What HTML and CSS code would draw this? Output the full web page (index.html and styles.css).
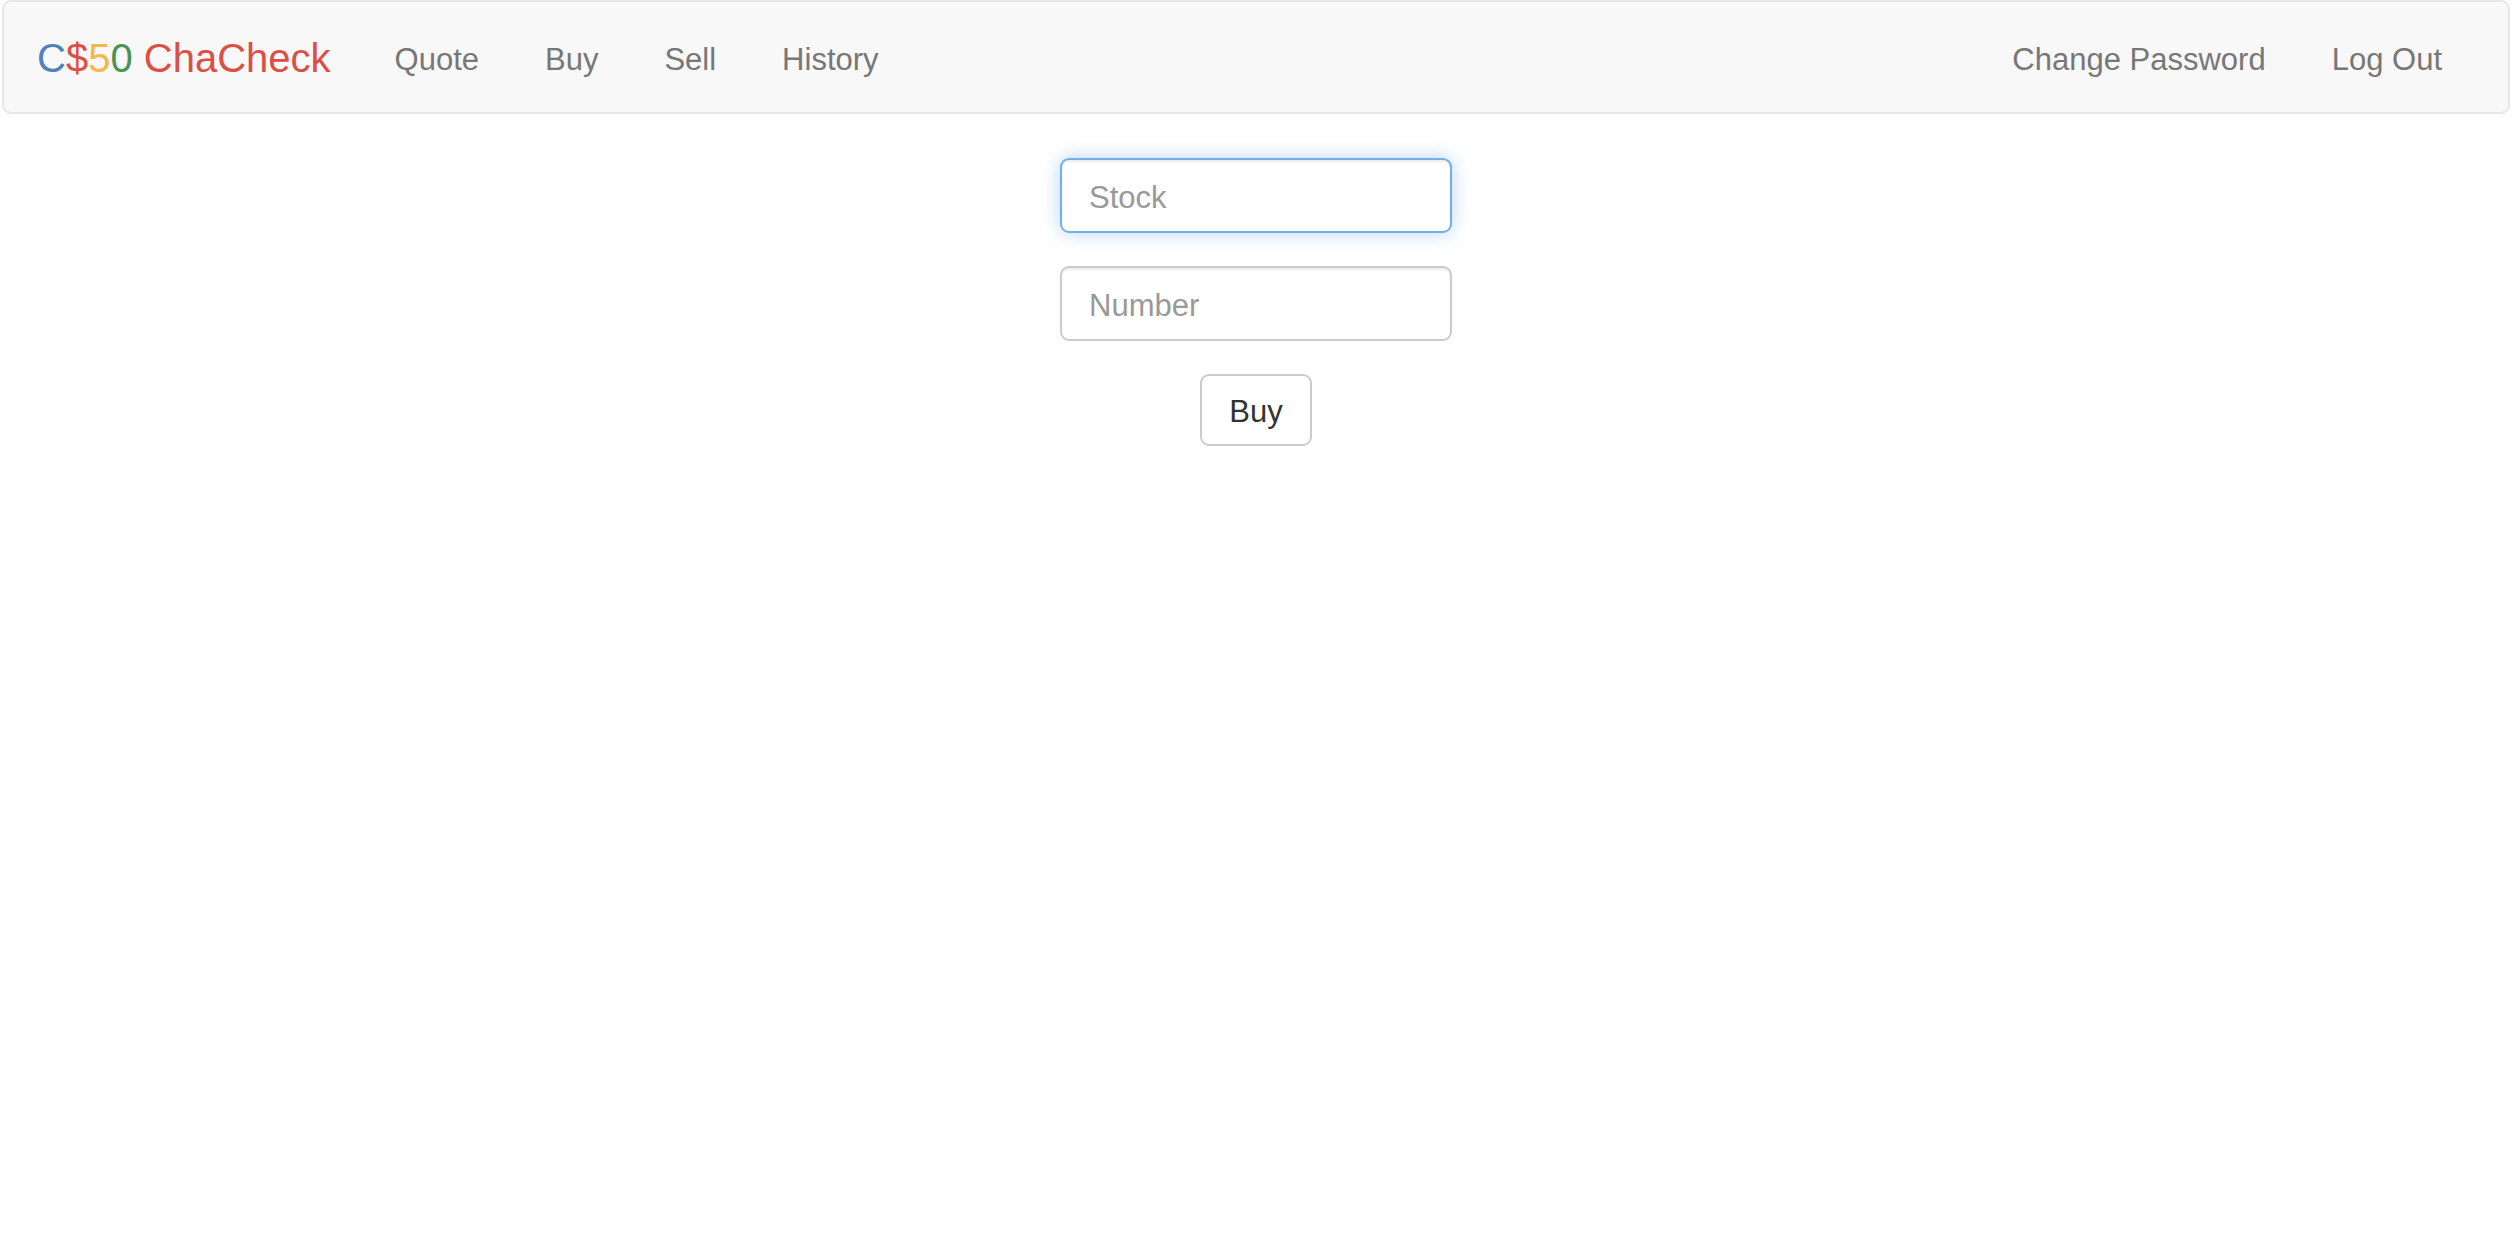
FILE: index.html
```html
<!DOCTYPE html>
<html lang="en">
<head>
<meta charset="utf-8">
<meta name="viewport" content="width=device-width, initial-scale=1">
<title>C$50 ChaCheck: Buy</title>
<link rel="stylesheet" href="styles.css">
</head>
<body>
<nav class="navbar">
  <a class="brand" href="/"><span class="blue">C</span><span class="red">$</span><span class="yellow">5</span><span class="green">0</span> <span class="red">ChaCheck</span></a>
  <ul class="nav-list">
    <li><a class="nav-link" href="/quote">Quote</a></li>
    <li><a class="nav-link" href="/buy">Buy</a></li>
    <li><a class="nav-link" href="/sell">Sell</a></li>
    <li><a class="nav-link" href="/history">History</a></li>
  </ul>
  <ul class="nav-list nav-right">
    <li><a class="nav-link" href="/password">Change Password</a></li>
    <li><a class="nav-link" href="/logout">Log Out</a></li>
  </ul>
</nav>
<main>
  <form class="trade-form" action="/buy" method="post">
    <input class="field" type="text" name="symbol" placeholder="Stock" aria-label="Stock" autocomplete="off" autofocus>
    <input class="field" type="text" name="shares" placeholder="Number" aria-label="Number" autocomplete="off">
    <button class="button" type="submit">Buy</button>
  </form>
</main>
</body>
</html>
```
FILE: styles.css
```css
* {
  box-sizing: border-box;
}

body {
  margin: 0 4px 0 2px;
  background: #fff;
  color: #333;
  font-family: "Helvetica Neue", Helvetica, "Liberation Sans", Arial, sans-serif;
  font-size: 31px;
  line-height: 44px;
}

.navbar {
  display: flex;
  flex-wrap: wrap;
  align-items: center;
  padding: 0 33px 0 0;
  border: 2px solid #e7e7e7;
  border-radius: 9px;
  background: #f8f8f8;
}

.brand {
  padding: 34px 31px 32px 33px;
  font-size: 40px;
  text-decoration: none;
}

.blue { color: #537fbe; }
.red { color: #db5044; }
.yellow { color: #f2b84b; }
.green { color: #4a9452; }

.nav-list {
  display: flex;
  flex-wrap: wrap;
  margin: 0;
  padding: 0;
  list-style: none;
}

.nav-right {
  margin-left: auto;
}

.nav-link {
  display: block;
  padding: 36px 33px 30px;
  color: #777;
  text-decoration: none;
}

.trade-form {
  display: flex;
  flex-direction: column;
  align-items: center;
  gap: 33px;
  padding: 44px 16px;
}

.field,
.button {
  border: 2px solid #ccc;
  border-radius: 9px;
  background: #fff;
  font: inherit;
}

.field {
  width: 392px;
  max-width: 100%;
  height: 75px;
  padding: 4px 27px 0;
  color: #555;
  box-shadow: inset 0 2px 2px rgba(0, 0, 0, 0.075);
}

.field::placeholder {
  color: #999;
  opacity: 1;
}

.field:focus {
  border-color: #72aee8;
  outline: 0;
  box-shadow: inset 0 2px 2px rgba(0, 0, 0, 0.075), 0 0 18px rgba(114, 174, 232, 0.5);
  caret-color: transparent;
}

.button {
  padding: 14px 27px 10px;
  color: #333;
}
```
